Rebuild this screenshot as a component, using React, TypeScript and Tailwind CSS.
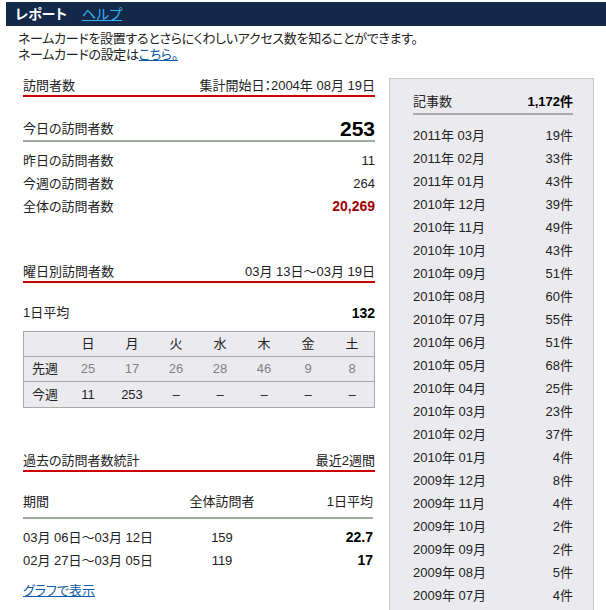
import React from "react";

const months: [string, string][] = [
  ["2011年 03月", "19件"],
  ["2011年 02月", "33件"],
  ["2011年 01月", "43件"],
  ["2010年 12月", "39件"],
  ["2010年 11月", "49件"],
  ["2010年 10月", "43件"],
  ["2010年 09月", "51件"],
  ["2010年 08月", "60件"],
  ["2010年 07月", "55件"],
  ["2010年 06月", "51件"],
  ["2010年 05月", "68件"],
  ["2010年 04月", "25件"],
  ["2010年 03月", "23件"],
  ["2010年 02月", "37件"],
  ["2010年 01月", "4件"],
  ["2009年 12月", "8件"],
  ["2009年 11月", "4件"],
  ["2009年 10月", "2件"],
  ["2009年 09月", "2件"],
  ["2009年 08月", "5件"],
  ["2009年 07月", "4件"],
];

const days = ["日", "月", "火", "水", "木", "金", "土"];
const lastWeek = ["25", "17", "26", "28", "46", "9", "8"];
const thisWeek = ["11", "253", "–", "–", "–", "–", "–"];

const SectionHeader = ({ title, right }: { title: string; right: string }) => (
  <div className="flex justify-between leading-[18px] border-b-2 border-[#cc0000]">
    <span>{title}</span>
    <span>{right}</span>
  </div>
);

export default function App() {
  return (
    <div className="w-[606px] h-[610px] overflow-hidden bg-white text-[13px] text-[#222] font-['Liberation_Sans','Noto_Sans_CJK_JP',sans-serif] [font-feature-settings:'palt']">
      <div className="mt-[2px] ml-[6px] h-[24px] bg-[#13294a] flex items-center pl-[9px] gap-[15px]">
        <span className="font-bold text-white text-[14px]">レポート</span>
        <a href="#" className="text-[#38b0f0] underline text-[14px]">
          ヘルプ
        </a>
      </div>

      <div className="ml-[18px] mt-[5px] leading-[16px] tracking-[-0.3px]">
        <p>ネームカードを設置するとさらにくわしいアクセス数を知ることができます。</p>
        <p>
          ネームカードの設定は
          <a href="#" className="text-[#0b5aa5] underline">
            こちら。
          </a>
        </p>
      </div>

      <div className="flex items-start mt-[14px]">
        {/* left column */}
        <div className="ml-[23px] w-[352px]">
          <SectionHeader title="訪問者数" right="集計開始日：2004年 08月 19日" />

          <div className="mt-[21px] flex justify-between items-center leading-[22px] border-b-2 border-[#9eaa9e]">
            <span>今日の訪問者数</span>
            <span className="text-[21px] font-bold text-black">253</span>
          </div>
          <div className="mt-[7px] leading-[23px]">
            <div className="flex justify-between">
              <span>昨日の訪問者数</span>
              <span>11</span>
            </div>
            <div className="flex justify-between">
              <span>今週の訪問者数</span>
              <span>264</span>
            </div>
            <div className="flex justify-between">
              <span>全体の訪問者数</span>
              <span className="text-[14px] font-bold text-[#a00000]">20,269</span>
            </div>
          </div>

          <div className="mt-[45px]">
            <SectionHeader title="曜日別訪問者数" right="03月 13日～03月 19日" />
          </div>
          <div className="mt-[19px] flex justify-between leading-[22px]">
            <span>1日平均</span>
            <span className="text-[14px] font-bold text-black">132</span>
          </div>
          <div className="mt-[7px] border border-[#a8a8a8] bg-[#eaeaef]">
            <div className="grid grid-cols-[42px_repeat(7,44px)] h-[25px] items-center border-b border-[#a8a8a8]">
              <span />
              {days.map((d) => (
                <span key={d} className="text-center">
                  {d}
                </span>
              ))}
            </div>
            <div className="grid grid-cols-[42px_repeat(7,44px)] h-[25px] items-center border-b border-[#a8a8a8]">
              <span className="pl-[8px]">先週</span>
              {lastWeek.map((v, i) => (
                <span key={i} className="text-center text-[#808080]">
                  {v}
                </span>
              ))}
            </div>
            <div className="grid grid-cols-[42px_repeat(7,44px)] h-[25px] items-center">
              <span className="pl-[8px]">今週</span>
              {thisWeek.map((v, i) => (
                <span key={i} className="text-center">
                  {v}
                </span>
              ))}
            </div>
          </div>

          <div className="mt-[44px]">
            <SectionHeader title="過去の訪問者数統計" right="最近2週間" />
          </div>
          <div className="pr-[2px]">
            <div className="mt-[19px] grid grid-cols-[150px_98px_1fr] leading-[22px] pb-[4px] border-b-2 border-[#9eaa9e]">
              <span>期間</span>
              <span className="text-center">全体訪問者</span>
              <span className="text-right">1日平均</span>
            </div>
            <div className="mt-[7px] leading-[23px]">
              <div className="grid grid-cols-[150px_98px_1fr]">
                <span>03月 06日～03月 12日</span>
                <span className="text-center">159</span>
                <span className="text-right text-[14px] font-bold text-black">22.7</span>
              </div>
              <div className="grid grid-cols-[150px_98px_1fr]">
                <span>02月 27日～03月 05日</span>
                <span className="text-center">119</span>
                <span className="text-right text-[14px] font-bold text-black">17</span>
              </div>
            </div>
          </div>
          <div className="mt-[8px] leading-[22px]">
            <a href="#" className="text-[#0b5aa5] underline">
              グラフで表示
            </a>
          </div>
        </div>

        {/* right column */}
        <div className="ml-[14px] mt-[1px] w-[205px] h-[560px] border border-[#c8c8c8] bg-[#ebebef] pl-[23px] pr-[20px] pt-[12px]">
          <div className="flex justify-between leading-[22px] border-b-2 border-[#aaaaaa]">
            <span>記事数</span>
            <span className="font-bold text-black">1,172件</span>
          </div>
          <div className="mt-[9px] leading-[23px]">
            {months.map(([m, c]) => (
              <div key={m} className="flex justify-between">
                <span>{m}</span>
                <span>{c}</span>
              </div>
            ))}
          </div>
        </div>
      </div>
    </div>
  );
}
